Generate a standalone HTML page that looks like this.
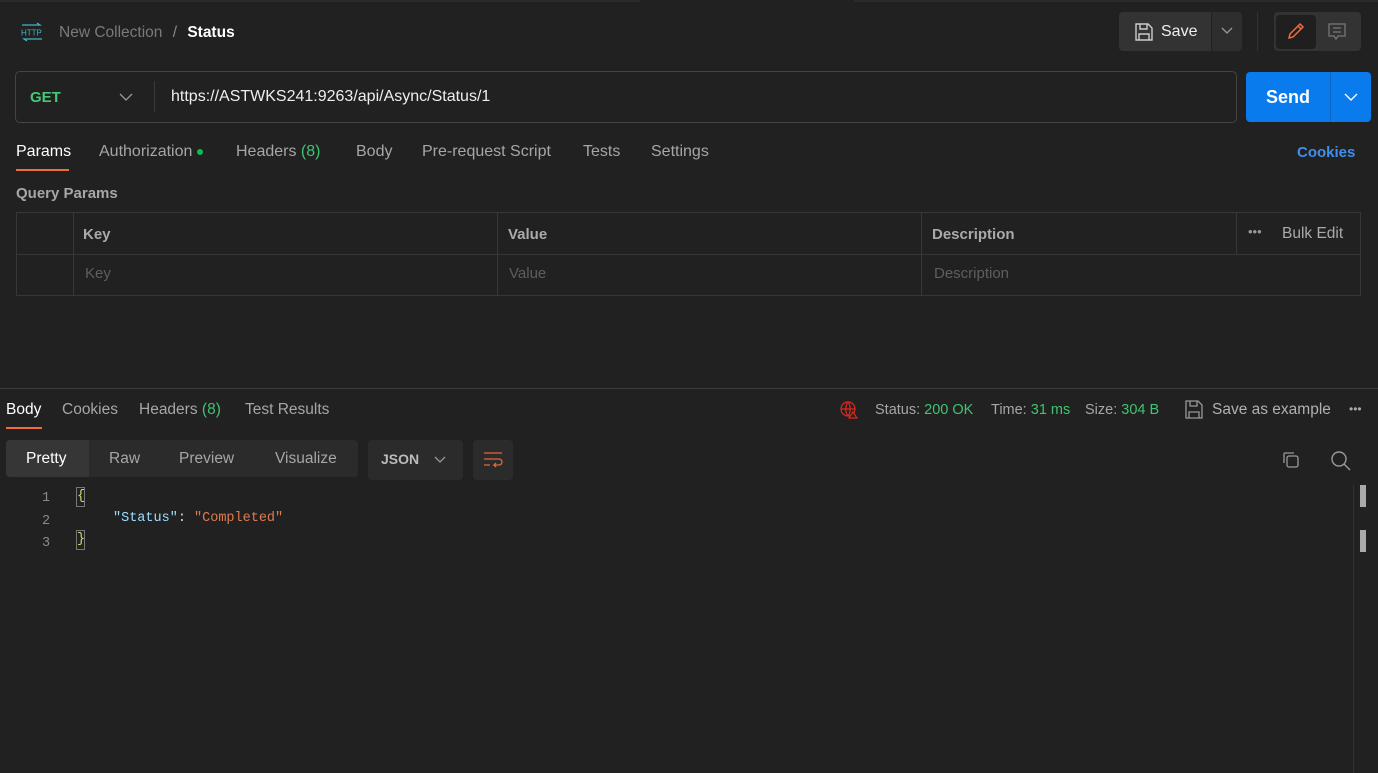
<!DOCTYPE html>
<html><head><style>
*{box-sizing:border-box;margin:0;padding:0}
body{width:1378px;height:773px;background:#212121;font-family:"Liberation Sans",sans-serif;color:#ccc;position:relative;overflow:hidden;font-size:14px}
.a{position:absolute;white-space:nowrap}
.g{color:#3fc46f}
.t{color:#a6a6a6}
.m{font-family:'Liberation Mono',monospace;font-size:13.5px}
</style></head><body>
<div class="a" style="left:0;top:0;width:1378px;height:2px;background:#2b2b2b"></div>
<div class="a" style="left:640px;top:0;width:214px;height:2px;background:#212121"></div>
<svg class="a" style="left:20px;top:22px" width="24" height="20" viewBox="0 0 24 20"><path d="M2 3h18l-3-2M22 17H4l3 2" stroke="#3bb8c8" stroke-width="1.2" fill="none"/><text x="1" y="13.5" font-size="8" fill="#3bb8c8" font-family="Liberation Sans">HTTP</text></svg>
<div class="a" style="left:59px;top:24px;font-size:15.5px;color:#7a7a7a">New Collection <span style="margin:0 6px;color:#888">/</span> <b style="color:#fff">Status</b></div>
<div class="a" style="left:1119px;top:12px;width:92px;height:39px;background:#333;border-radius:4px 0 0 4px"></div>
<svg class="a" style="left:1134px;top:22px" width="20" height="20" viewBox="0 0 20 20" fill="none" stroke="#ccc" stroke-width="1.4"><path d="M2 2h12l4 4v12H2z M6 2v5h7V2 M5 18v-6h10v6"/></svg>
<div class="a" style="left:1161px;top:23px;font-size:16px;color:#eee">Save</div>
<div class="a" style="left:1212px;top:12px;width:30px;height:39px;background:#2e2e2e;border-radius:0 4px 4px 0"></div>
<svg class="a" style="left:1221px;top:27px" width="12" height="8"><path d="M1 1l5 5 5-5" stroke="#999" fill="none" stroke-width="1.3"/></svg>
<div class="a" style="left:1257px;top:12px;width:1px;height:39px;background:#333"></div>
<div class="a" style="left:1274px;top:12px;width:87px;height:39px;background:#333;border-radius:4px"></div>
<div class="a" style="left:1276px;top:15px;width:40px;height:34px;background:#1f1f1f;border-radius:4px"></div>
<svg class="a" style="left:1286px;top:21px" width="20" height="20" viewBox="0 0 20 20" fill="none" stroke="#f26b3a" stroke-width="1.5"><path d="M3 17l1-4L14 3l3 3L7 16z M12 5l3 3"/></svg>
<svg class="a" style="left:1327px;top:22px" width="20" height="20" viewBox="0 0 20 20" fill="none" stroke="#777" stroke-width="1.3"><path d="M2 2h16v12h-7l-2 3-2-3H2z M6 6h8M6 10h8"/></svg>
<div class="a" style="left:15px;top:71px;width:1222px;height:52px;border:1px solid #444;border-radius:5px"></div>
<div class="a" style="left:30px;top:89px;font-size:15px;font-weight:bold;color:#48c774">GET</div>
<svg class="a" style="left:119px;top:93px" width="14" height="8"><path d="M1 1l6 6 6-6" stroke="#999" fill="none" stroke-width="1.3"/></svg>
<div class="a" style="left:154px;top:81px;width:1px;height:31px;background:#3a3a3a"></div>
<div class="a" style="left:171px;top:88px;font-size:16px;color:#eee">https://ASTWKS241:9263/api/Async/Status/1</div>
<div class="a" style="left:1246px;top:72px;width:125px;height:50px;background:#097bed;border-radius:4px"></div>
<div class="a" style="left:1330px;top:72px;width:1px;height:50px;background:#0a68c4"></div>
<div class="a" style="left:1266px;top:87px;font-size:18px;font-weight:bold;color:#fff">Send</div>
<svg class="a" style="left:1344px;top:93px" width="14" height="8"><path d="M1 1l6 6 6-6" stroke="#fff" fill="none" stroke-width="1.4"/></svg>
<div class="a" style="left:16px;top:143px;font-size:16px;color:#fff">Params</div>
<div class="a" style="left:16px;top:169px;width:53px;height:2px;background:#f26b3a"></div>
<div class="a t" style="left:99px;top:143px;font-size:16px">Authorization <span style="display:inline-block;width:6px;height:6px;border-radius:3px;background:#0cbb52;vertical-align:middle"></span></div>
<div class="a t" style="left:236px;top:143px;font-size:16px">Headers <span class="g">(8)</span></div>
<div class="a t" style="left:356px;top:143px;font-size:16px">Body</div>
<div class="a t" style="left:422px;top:143px;font-size:16px">Pre-request Script</div>
<div class="a t" style="left:583px;top:143px;font-size:16px">Tests</div>
<div class="a t" style="left:651px;top:143px;font-size:16px">Settings</div>
<div class="a" style="left:1297px;top:144px;font-size:15px;font-weight:bold;color:#3f8ff0">Cookies</div>
<div class="a" style="left:16px;top:185px;font-size:15px;font-weight:bold;color:#a6a6a6">Query Params</div>
<div class="a" style="left:16px;top:212px;width:1345px;height:84px;border:1px solid #373737"></div>
<div class="a" style="left:16px;top:254px;width:1345px;height:1px;background:#373737"></div>
<div class="a" style="left:73px;top:212px;width:1px;height:84px;background:#373737"></div>
<div class="a" style="left:497px;top:212px;width:1px;height:84px;background:#373737"></div>
<div class="a" style="left:921px;top:212px;width:1px;height:84px;background:#373737"></div>
<div class="a" style="left:1236px;top:212px;width:1px;height:42px;background:#373737"></div>
<div class="a" style="left:83px;top:226px;font-size:15px;font-weight:bold;color:#aaa">Key</div>
<div class="a" style="left:508px;top:226px;font-size:15px;font-weight:bold;color:#aaa">Value</div>
<div class="a" style="left:932px;top:226px;font-size:15px;font-weight:bold;color:#aaa">Description</div>
<div class="a" style="left:1248px;top:224px;font-size:13px;color:#999">•••</div>
<div class="a" style="left:1282px;top:225px;font-size:15.5px;color:#aaa">Bulk Edit</div>
<div class="a" style="left:85px;top:265px;font-size:15px;color:#5e5e5e">Key</div>
<div class="a" style="left:509px;top:265px;font-size:15px;color:#5e5e5e">Value</div>
<div class="a" style="left:934px;top:265px;font-size:15px;color:#5e5e5e">Description</div>
<div class="a" style="left:0;top:388px;width:1378px;height:1px;background:#3a3a3a"></div>
<div class="a" style="left:6px;top:401px;font-size:15.5px;color:#fff">Body</div>
<div class="a" style="left:6px;top:427px;width:36px;height:2px;background:#f26b3a"></div>
<div class="a t" style="left:62px;top:401px;font-size:15.5px">Cookies</div>
<div class="a t" style="left:139px;top:401px;font-size:15.5px">Headers <span class="g">(8)</span></div>
<div class="a t" style="left:245px;top:401px;font-size:15.5px">Test Results</div>
<svg class="a" style="left:839px;top:400px" width="20" height="20" viewBox="0 0 20 20" fill="none" stroke="#e0261c" stroke-width="1.2"><circle cx="9" cy="9" r="7"/><path d="M2 9h14M9 2c-3 4-3 10 0 14M9 2c3 4 3 10 0 14"/><path d="M14 12l4 6h-8z" fill="#212121"/></svg>
<div class="a" style="left:875px;top:402px;font-size:14.5px;color:#a6a6a6">Status: <span class="g">200 OK</span></div>
<div class="a" style="left:991px;top:402px;font-size:14.5px;color:#a6a6a6">Time: <span class="g">31 ms</span></div>
<div class="a" style="left:1085px;top:402px;font-size:14.5px;color:#a6a6a6">Size: <span class="g">304 B</span></div>
<svg class="a" style="left:1185px;top:400px" width="18" height="19" viewBox="0 0 18 19" fill="none" stroke="#999" stroke-width="1.3"><path d="M1 1h12l4 4v13H1z M5 1v5h7V1 M4 18v-6h10v6"/></svg>
<div class="a" style="left:1212px;top:401px;font-size:15.5px;color:#b0b0b0">Save as example</div>
<div class="a" style="left:1349px;top:402px;font-size:12px;color:#aaa">•••</div>
<div class="a" style="left:6px;top:440px;width:352px;height:37px;background:#2b2b2b;border-radius:4px"></div>
<div class="a" style="left:6px;top:440px;width:83px;height:37px;background:#363636;border-radius:4px 0 0 4px"></div>
<div class="a" style="left:26px;top:450px;font-size:15.5px;color:#fff">Pretty</div>
<div class="a t" style="left:109px;top:450px;font-size:15.5px">Raw</div>
<div class="a t" style="left:179px;top:450px;font-size:15.5px">Preview</div>
<div class="a t" style="left:275px;top:450px;font-size:15.5px">Visualize</div>
<div class="a" style="left:368px;top:440px;width:95px;height:40px;background:#2b2b2b;border-radius:4px"></div>
<div class="a" style="left:381px;top:451px;font-size:14px;font-weight:bold;color:#bbb">JSON</div>
<svg class="a" style="left:434px;top:456px" width="12" height="8"><path d="M1 1l5 5 5-5" stroke="#999" fill="none" stroke-width="1.3"/></svg>
<div class="a" style="left:473px;top:440px;width:40px;height:40px;background:#2b2b2b;border-radius:4px"></div>
<svg class="a" style="left:483px;top:450px" width="20" height="20" viewBox="0 0 20 20" fill="none" stroke="#e0683a" stroke-width="1.3"><path d="M1 3h18M1 9h15a3 3 0 010 6h-5l2-2M13 17l-2-2M1 15h6"/></svg>
<svg class="a" style="left:1281px;top:450px" width="20" height="20" viewBox="0 0 20 20" fill="none" stroke="#999" stroke-width="1.3"><rect x="6" y="6" width="11" height="11" rx="2"/><path d="M3 13V4a1 1 0 011-1h9"/></svg>
<svg class="a" style="left:1330px;top:450px" width="22" height="22" viewBox="0 0 22 22" fill="none" stroke="#999" stroke-width="1.4"><circle cx="9" cy="9" r="7"/><path d="M14 14l6 6"/></svg>
<div class="a m" style="left:42px;top:488px;color:#8a8a8a;line-height:22.5px">1<br>2<br>3</div>
<div class="a" style="left:76px;top:487px;width:9px;height:20px;border:1px solid #777"></div>
<div class="a" style="left:76px;top:530px;width:9px;height:20px;border:1px solid #777"></div>
<div class="a m" style="left:77px;top:489px;color:#d6d67a">{</div>
<div class="a m" style="left:77px;top:532px;color:#d6d67a">}</div>
<div class="a m" style="left:113px;top:511px;color:#ddd"><span style="color:#9cdcfe">"Status"</span>: <span style="color:#e07a4f">"Completed"</span></div>
<div class="a" style="left:1353px;top:485px;width:1px;height:288px;background:#333"></div>
<div class="a" style="left:1360px;top:485px;width:6px;height:22px;background:#aaa"></div>
<div class="a" style="left:1360px;top:530px;width:6px;height:22px;background:#aaa"></div>
</body></html>
